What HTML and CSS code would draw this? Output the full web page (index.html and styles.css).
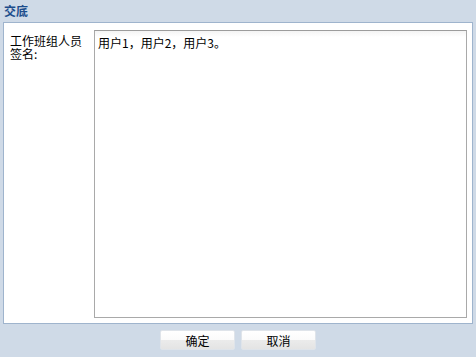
FILE: index.html
```html
<!DOCTYPE html>
<html lang="zh-CN">
<head>
    <meta charset="UTF-8">
    <title>交底</title>
    <link rel="stylesheet" href="styles.css">
</head>
<body>
    <div class="title-bar">交底</div>

    <div class="panel">
        <div class="field-label">工作班组人员签名:</div>
        <textarea class="sign-box">用户1，用户2，用户3。</textarea>
    </div>

    <div class="button-bar">
        <button class="btn">确定</button>
        <button class="btn">取消</button>
    </div>
</body>
</html>
```

FILE: styles.css
```css
body {
    margin: 0;
    padding: 0;
    background-color: #cfdae7;
    font-family: "Noto Sans CJK SC", "Liberation Sans", sans-serif;
    font-size: 12px;
    color: #000;
    width: 476px;
    height: 357px;
    overflow: hidden;
}
.title-bar {
    height: 22px;
    line-height: 22px;
    padding-left: 4px;
    font-weight: bold;
    color: #1d4d8c;
    box-sizing: border-box;
}
.panel {
    margin: 0 3px;
    height: 302px;
    box-sizing: border-box;
    border: 1px solid #9fb4cd;
    background: #fff;
    display: flex;
    padding: 7px 5px 5px 0;
}
.field-label {
    width: 74px;
    padding: 4px 10px 0 6px;
    line-height: 13px;
    flex-shrink: 0;
}
.sign-box {
    flex: 1;
    margin: 0;
    border: 1px solid #a9a9a9;
    border-top-color: #9c9c9c;
    background: linear-gradient(#f4f4f4, #fff 6px);
    font-family: "Noto Sans CJK SC", "Liberation Sans", sans-serif;
    font-size: 12px;
    line-height: 16px;
    padding: 4px 3px;
    resize: none;
    outline: none;
}
.button-bar {
    display: flex;
    justify-content: center;
    gap: 6px;
    padding-top: 6px;
}
.btn {
    width: 75px;
    height: 20px;
    border: 1px solid #dfe4ea;
    border-radius: 2px;
    background: linear-gradient(#ffffff 0%, #fbfbfb 50%, #ebebeb 51%, #e4e4e4 100%);
    font-family: "Noto Sans CJK SC", "Liberation Sans", sans-serif;
    font-size: 12px;
    color: #000;
    padding: 0;
    cursor: pointer;
}
```
